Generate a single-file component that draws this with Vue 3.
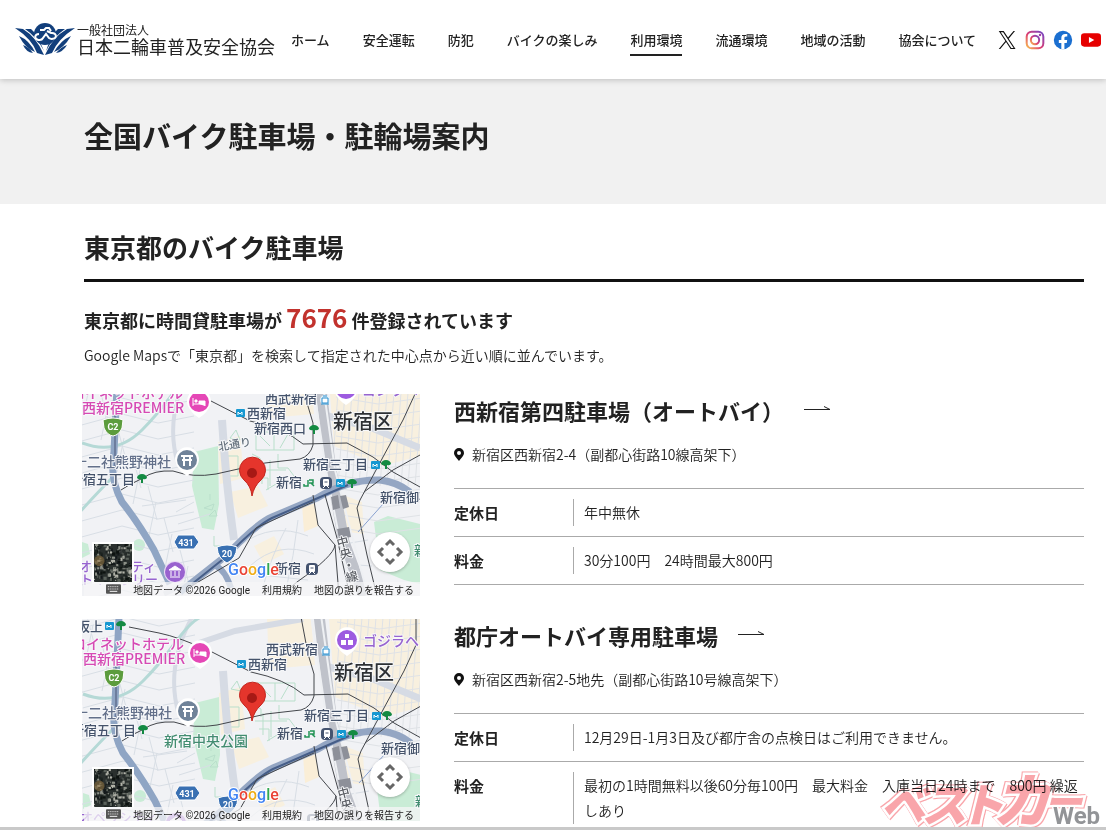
<script setup>
const nav = [
  { label: 'ホーム' },
  { label: '安全運転' },
  { label: '防犯' },
  { label: 'バイクの楽しみ' },
  { label: '利用環境', current: true },
  { label: '流通環境' },
  { label: '地域の活動' },
  { label: '協会について' },
]

const lots = [
  {
    name: '西新宿第四駐車場（オートバイ）',
    address: '新宿区西新宿2-4（副都心街路10線高架下）',
    closed: '年中無休',
    fee: '30分100円　24時間最大800円',
    shift: [0, 0],
    west: true,
  },
  {
    name: '都庁オートバイ専用駐車場',
    address: '新宿区西新宿2-5地先（副都心街路10号線高架下）',
    closed: '12月29日-1月3日及び都庁舎の点検日はご利用できません。',
    fee: '最初の1時間無料以後60分毎100円　最大料金　入庫当日24時まで　800円 繰返しあり',
    shift: [1, 26],
    park: true,
  },
]

const westStreets = Array.from({ length: 17 }, (_, i) => {
  const y = -44 + i * 16
  return `M-4 ${y + 12}L40 ${y}L76 ${y + 9}L112 ${y + 2}M${i * 8 - 6} ${y - 8}l${i % 2 ? 9 : -7} 34`
}).join('')
const eastStreets = Array.from({ length: 14 }, (_, i) => {
  const y = -36 + i * 13
  return `M254 ${y}L296 ${y + 7}L340 ${y + 1}M${258 + i * 7} -28l-9 120`
}).join('')
const southStreets = 'M160 150Q190 128 226 142M168 172Q196 146 232 160M180 196Q190 160 204 134M204 196Q212 162 216 126M150 178L226 186M262 150L286 146M262 170L290 172M96 130L128 120M94 118L112 108M60 112L104 106'

const trees = [[60, 84], [304, 70], [270, 89], [38, -20]]
const metros = [[158, 19], [293, 71], [258, 89], [26, -19]]
const trains = [[244, 89], [230, 175]]

let seed = 7
const random = () => {
  seed = (seed * 16807) % 2147483647
  return seed / 2147483647
}
const tones = ['#8b8f86', '#0d1210', '#5b625c', '#14191b', '#b3b4aa', '#1c2320']
const specks = Array.from({ length: 240 }, () => ({
  x: Math.floor(random() * 36),
  y: Math.floor(random() * 36),
  w: 1 + Math.floor(random() * 3),
  h: 1 + Math.floor(random() * 3),
  tone: tones[Math.floor(random() * tones.length)],
}))
</script>

<template>
  <div class="page">
    <header class="header">
      <a href="#" class="brand">
        <svg class="emblem" viewBox="0 0 60 33" aria-hidden="true">
          <g fill="#123f7c">
            <path d="M0 5L8 6Q21 14 28 30L29 32L22 30Q17 16 0 5Z" />
            <path d="M10 6L16 6Q19 8 20 12Q25 18 29 28Q22 14 10 6Z" />
            <path d="M4 13Q14 17 20 29Q10 25 4 13Z" />
            <path d="M8 22Q14 24 18 30Q11 29 8 22Z" />
            <path d="M60 5L52 6Q38 14 31 30L30 32L37 30Q43 16 60 5Z" />
            <path d="M50 6L43 6Q40 8 39 12Q34 18 31 28Q38 14 50 6Z" />
            <path d="M56 13Q46 17 39 29Q49 25 56 13Z" />
            <path d="M52 22Q46 24 41 30Q48 29 52 22Z" />
            <circle cx="30" cy="11" r="11" />
          </g>
          <path d="M25 7h4l2-2h3l2 3M24 11a4 3 0 1 0 4 4l3-4l3 4a4 3 0 1 0 2-5l-4-2" fill="none" stroke="#fff" stroke-width="2" />
        </svg>
        <span class="brand-text"><small>一般社団法人</small><span>日本二輪車普及安全協会</span></span>
      </a>
      <nav class="nav" aria-label="メイン">
        <a v-for="n in nav" :key="n.label" href="#" :class="{ current: n.current }">{{ n.label }}</a>
      </nav>
      <div class="social">
        <a href="#" aria-label="X">
          <svg viewBox="0 0 24 24"><path fill="#111" d="M14.3 10.2 22.7 0h-2l-7.300 8.800L7.600 0H1l8.800 13.300L1 24h2l7.700-9.300L16.800 24h6.600zM3.700 1.500h3.100l14 21h-3.100z" /></svg>
        </a>
        <a href="#" aria-label="Instagram">
          <svg viewBox="0 0 24 24">
            <defs>
              <linearGradient id="insta" x1="0" y1="1" x2="1" y2="0">
                <stop offset="0" stop-color="#f9c04d" /><stop offset=".45" stop-color="#dc3b72" /><stop offset="1" stop-color="#7148c8" />
              </linearGradient>
            </defs>
            <g fill="none" stroke="url(#insta)" stroke-width="2.400">
              <rect x="2" y="2" width="20" height="20" rx="6" /><circle cx="12" cy="12" r="5" />
            </g>
            <circle cx="18" cy="6" r="1.500" fill="#a044a8" />
          </svg>
        </a>
        <a href="#" aria-label="Facebook">
          <svg viewBox="0 0 24 24">
            <circle cx="12" cy="12" r="11" fill="#1b6fd0" />
            <path fill="#fff" d="M10 23v-7.500H7V12h3V9.400C10 6.400 11.800 4.700 14.500 4.700c1.300 0 2.600.2 2.600.2v3h-1.500c-1.500 0-1.900.9-1.900 1.800V12H17l-.5 3.500h-2.800V23z" />
          </svg>
        </a>
        <a href="#" aria-label="YouTube">
          <svg viewBox="0 0 24 24"><rect x="0" y="4" width="24" height="16" rx="4" fill="#e60000" /><path d="M9.500 8.500v7l6.500-3.500z" fill="#fff" /></svg>
        </a>
      </div>
    </header>

    <div class="hero"><h1>全国バイク駐車場・駐輪場案内</h1></div>

    <main class="main">
      <h2>東京都のバイク駐車場</h2>
      <p class="count">東京都に時間貸駐車場が <strong>7676</strong> 件登録されています</p>
      <p class="note">Google Mapsで「東京都」を検索して指定された中心点から近い順に並んでいます。</p>

      <article v-for="lot in lots" :key="lot.name" class="lot">
        <div class="map">
          <svg class="map-canvas" viewBox="0 0 338 202" preserveAspectRatio="xMidYMid slice" role="img" aria-label="地図">
            <rect width="338" height="202" fill="#f1f2f5" />
            <g :transform="`translate(${lot.shift[0]} ${lot.shift[1]})`">
              <g fill="#f8f0df">
                <path d="M136 48L158 42L162 84L138 90ZM148 98L176 92L186 112L156 124ZM246 -26H338V62L300 72L252 52ZM184 -26L228 -26L232 20L186 24ZM258 100L280 108L282 140L266 138ZM172 152L192 142L202 160L182 170Z" />
              </g>
              <path d="M220 110L232 106L236 132L222 138Z" fill="#faeed7" />
              <g fill="#c9ecd6">
                <path d="M112 58L136 52L137 110L132 136L120 134L110 92Z" />
                <path d="M292 128L306 122L338 130V190L322 186L298 176Z" />
                <circle cx="57" cy="151" r="6" /><path d="M0 148l6 2 2 10-8 4z" />
              </g>
              <g fill="none" stroke="#d8dee5" stroke-width="1">
                <path :d="westStreets" /><path :d="southStreets" />
              </g>
              <path :d="eastStreets" fill="none" stroke="#dfe2e6" stroke-width="1" />
              <g fill="none" stroke="#b9dfcb" stroke-width="1">
                <path d="M174 38h38v18h-38zM178 42l10 10M192 38v18M206 40l-8 14M142 62h14v20h-14zM180 68v22M188 66v26M172 76h32M132 142v10h6v8M127 122l6-6 2 6z" />
                <path d="M148 44l6-8 4 10zM176 84h10v12M196 60v14h10M184 96l10-6M122 114l10-4-2 6zM128 100v6M300 140l6 4-4 6M170 60l8 4v8M206 74l6 8" />
              </g>
              <g fill="none" stroke="#d6dbe4">
                <path d="M108 -26Q82 24 96 70" stroke-width="4" /><path d="M140 26Q144 90 152 146" stroke-width="8" />
                <path d="M116 -2L152 -14L220 -26" stroke-width="6" /><path d="M246 22L290 34L338 54" stroke-width="7" />
                <path d="M82 200L104 190" stroke-width="5" />
              </g>
              <path d="M0 49Q34 62 60 36Q76 20 92 -2T118 -28M-4 120Q16 98 30 84" fill="none" stroke="#b5d9d6" stroke-width="3" />
              <path d="M36 -28L32 58Q27 84 40 108Q56 128 72 156L88 190" fill="none" stroke="#8fa5c4" stroke-width="7" />
              <path d="M33 8V76" fill="none" stroke="#6d7d9d" stroke-width="2" />
              <g fill="none" stroke="#bfc2ca">
                <path d="M236 -30L248 70L262 148L282 202" stroke-width="11" />
                <path d="M228 -30L244 76L257 142L270 202" stroke="#eef0f3" stroke-width="2" />
                <path d="M238 -30L253 76L270 142L286 202" stroke="#eef0f3" stroke-width="2" />
              </g>
              <path d="M249 103l7-2 2 13-7 2zM258 102l6-1 3 12-6 2zM255 135l12-2 2 10-12 2z" fill="#8d9099" />
              <g fill="none" stroke="#94a6c3" stroke-linejoin="round">
                <path d="M98 198L145 161Q174 130 190 123L235 104Q266 85 298 86Q315 88 328 98" stroke-width="7" />
                <path d="M134 172Q143 176 149 194" stroke-width="6" />
                <path d="M110 190L145 162Q174 132 190 124L236 104L266 91" stroke="#465e88" stroke-width="2" />
              </g>
              <g fill="none" stroke="#43464b" stroke-width="1">
                <path d="M39 96L47 91L61 84Q72 76 91 77Q111 84 134 80L183 69L218 65Q228 62 231 51V29L225 9L218 -28" />
                <path d="M46 -18L76 -12Q96 -8 129 7L168 27Q202 34 221 50L265 49L291 63L311 78L338 93" />
                <path d="M333 -26L333 0L321 26L301 63L278 106L275 114L285 161L295 202M338 61L311 76L282 98" />
                <path d="M231 101L236 131L253 151Q252 162 215 188L200 200M253 151L257 202M243 101L255 144L268 202M106 194L157 164L174 134L200 122L231 108" />
              </g>
              <path d="M310 100L276 138" stroke="#8aa2d0" stroke-width="1" />

              <g class="labels">
                <g fill="#d64ab4">
                  <text x="101" y="4" font-size="14" text-anchor="end">ロイネットホテル</text>
                  <text x="0" y="19" font-size="14">西新宿PREMIER</text>
                </g>
                <g fill="#63708a" font-size="14"><text x="89" y="73" text-anchor="end">十二社熊野神社</text></g>
                <g fill="#45536b" font-size="13">
                  <text x="53" y="90" text-anchor="end">西新宿五丁目</text>
                  <text x="20" y="-14" text-anchor="end">中野坂上</text>
                  <text x="183" y="9">西武新宿</text><text x="165" y="24">西新宿</text>
                  <text v-if="lot.west" x="172" y="39">新宿西口</text>
                  <text x="221" y="75">新宿三丁目</text><text x="194" y="93">新宿</text>
                  <text x="298" y="108">新宿御苑前</text><text v-if="lot.west" x="193" y="179">新宿</text>
                </g>
                <text v-if="lot.west" x="137" y="57" font-size="11" fill="#65717d" transform="rotate(-10 137 57)">北通り</text>
                <text x="251" y="35" font-size="20" fill="#2d3034">新宿区</text>
                <text v-if="lot.park" x="81" y="101" font-size="14" fill="#438d71">新宿中央公園</text>
                <text x="332" y="161" font-size="13" fill="#438d71">新宿御苑</text>
                <g fill="#9764cf">
                  <text x="280" y="1" font-size="14">ゴジラヘッド</text>
                  <text x="74" y="177" font-size="13" text-anchor="end">オペラシティ</text>
                  <text x="76" y="190" font-size="13" text-anchor="end">アートギャラリー</text>
                </g>
                <text x="259" y="142" font-size="12" fill="#5d6066" class="vertical" transform="rotate(-15 259 142)">中央・線</text>
              </g>

              <g v-for="t in trees" :key="`t${t}`" :transform="`translate(${t[0]} ${t[1]})`">
                <path d="M-5 0a5 4 0 1 1 10 0q-2 2-4 1v4h-2v-4q-2 1-4-1z" fill="#138a42" />
              </g>
              <g v-if="lot.west" transform="translate(232 35)"><path d="M-5 0a5 4 0 1 1 10 0q-2 2-4 1v4h-2v-4q-2 1-4-1z" fill="#138a42" /></g>
              <g v-for="m in metros" :key="`m${m}`" :transform="`translate(${m[0]} ${m[1]})`">
                <rect x="-4" y="-4" width="9" height="8" rx="1" fill="#1698d1" />
                <path d="M-2 2v-3l2 2 2-2v3" fill="none" stroke="#fff" stroke-width="1" />
              </g>
              <g v-for="t in trains" :key="`r${t}`" :transform="`translate(${t[0]} ${t[1]})`">
                <rect x="-6" y="-6" width="12" height="12" rx="4" fill="#44536f" />
                <rect x="-3" y="-4" width="6" height="7" rx="1" fill="#fff" /><path d="M-2-2h4v2h-4zM-3 5l2-2M3 5l-2-2" fill="#44536f" stroke="#fff" stroke-width="1" />
              </g>
              <path d="M222 90v2h4v-6M232 92l-3-3h-2M227 86h4v3h-2" fill="none" stroke="#239455" stroke-width="1.500" />
              <g transform="translate(243 6)"><circle r="5" fill="#e3f1fa" /><path d="M-3-2h6v5h-6zM-2-4h4M-4 4h8" fill="#fff" stroke="#2b8fce" stroke-width="1" /></g>

              <g transform="translate(117 8)">
                <path d="M-11 4Q-8 11 0 16Q8 11 11 4A12 12 0 1 0 -11 4Z" fill="#fff" /><circle r="10" fill="#e547b6" />
                <path d="M-6-4v8M-6 2H6M6 4v-5H0v3M-4-2h2v2h-2z" fill="#fff" stroke="#fff" stroke-width="1" />
              </g>
              <g transform="translate(105 66)">
                <path d="M-11 4Q-8 11 0 16Q8 11 11 4A12 12 0 1 0 -11 4Z" fill="#fff" /><circle r="10" fill="#708399" />
                <path d="M-6-4H6M-5 0H5M-3-4V6M3-4V6" stroke="#fff" stroke-width="2" />
              </g>
              <g transform="translate(264 -5)">
                <path d="M-11 4Q-8 11 0 16Q8 11 11 4A12 12 0 1 0 -11 4Z" fill="#fff" /><circle r="10" fill="#9d5be0" />
                <path d="M-2-6h4v4h-4zM-6 0h5v5h-5zM1 0h5v5H1z" fill="#fff" />
              </g>
              <g transform="translate(93 178)">
                <circle r="11" fill="#e8d9f5" /><circle r="10" fill="#9962cf" />
                <path d="M-6-2L0-6L6-2ZM-5 5H5M-4-1V4M0-1V4M4-1V4" fill="#fff" stroke="#fff" stroke-width="1" />
              </g>
              <g class="route">
                <path d="M21 26Q31 22 41 26L40 34Q37 41 31 42Q25 41 22 34Z" fill="#5c9c3d" stroke="#fff" /><text x="31" y="36">C2</text>
                <path d="M92 148L96 141H112L117 148L112 155H96Z" fill="#3970b2" stroke="#fff" /><text x="104" y="152">431</text>
                <path d="M135 153Q145 149 155 153Q154 165 145 169Q136 165 135 153Z" fill="#3970b2" stroke="#fff" /><text x="145" y="163">20</text>
              </g>
            </g>
            <g>
              <path d="M170 102Q169 92 162 86A13 13 0 1 1 179 86Q172 92 170 102Z" fill="#e5352c" stroke="#c3261f" stroke-width="1" />
              <circle cx="170" cy="79" r="5" fill="#a71915" />
            </g>
            <text class="google" x="146" y="181"><tspan fill="#4285f4">G</tspan><tspan fill="#ea4335">o</tspan><tspan fill="#f0ad16">o</tspan><tspan fill="#4285f4">g</tspan><tspan fill="#34a853">l</tspan><tspan fill="#ea4335">e</tspan></text>
          </svg>
          <button class="satellite" aria-label="航空写真">
            <svg viewBox="0 0 36 36">
              <rect width="36" height="36" fill="#2a302e" />
              <rect v-for="(s, i) in specks" :key="i" :x="s.x" :y="s.y" :width="s.w" :height="s.h" :fill="s.tone" />
              <circle cx="5" cy="16" r="5" fill="#8a6e3e" opacity=".6" />
            </svg>
          </button>
          <button class="pan" aria-label="地図の移動">
            <svg viewBox="0 0 40 40" fill="none" stroke="#666" stroke-width="3"><path d="M16 13l4-4 4 4M16 27l4 4 4-4M13 16l-4 4 4 4M27 16l4 4-4 4" /></svg>
          </button>
          <div class="credits">
            <svg viewBox="0 0 16 10" aria-hidden="true"><rect width="16" height="10" rx="1" fill="#555" /><path d="M2 2.500h12M2 5h12" stroke="#fff" stroke-dasharray="1 1" /><path d="M4 7.500h8" stroke="#fff" /></svg>
            <span>地図データ ©2026 Google</span><a href="#">利用規約</a><a href="#">地図の誤りを報告する</a>
          </div>
        </div>

        <div class="info">
          <h3><a href="#">{{ lot.name }}<svg viewBox="0 0 26 8" aria-hidden="true"><path d="M0 5.500H26L20 2.500" fill="none" stroke="#222" stroke-width="1" /></svg></a></h3>
          <p class="address">
            <svg viewBox="0 0 10 13" aria-hidden="true"><path fill="#111" fill-rule="evenodd" d="M5 0a5 5 0 0 1 5 5c0 3-3 5-5 8C3 10 0 8 0 5a5 5 0 0 1 5-5zM5 3a2 2 0 1 0 0 4a2 2 0 0 0 0-4z" /></svg>
            {{ lot.address }}
          </p>
          <table>
            <tbody>
              <tr><th scope="row">定休日</th><td><div>{{ lot.closed }}</div></td></tr>
              <tr><th scope="row">料金</th><td><div>{{ lot.fee }}</div></td></tr>
            </tbody>
          </table>
        </div>
      </article>
    </main>

    <div class="watermark">
      <svg viewBox="0 0 226 64" role="img" aria-label="ベストカーWeb">
        <text class="mark-text" y="56"><tspan x="2" font-size="46">ベ</tspan><tspan x="43" font-size="46">ス</tspan><tspan x="80" font-size="46">ト</tspan><tspan x="114" font-size="58">カ</tspan><tspan x="166" y="50" font-size="38">ー</tspan></text>
        <text x="175" y="58" class="web">Web</text>
      </svg>
    </div>
  </div>
</template>

<style>
body { margin: 0; background: #fff; }
</style>

<style scoped>
* { box-sizing: border-box; }
.page { position: relative; height: 100vh; overflow: hidden; border-bottom: 3px solid #c9c9c9; color: #222; font-family: "Noto Sans CJK JP", sans-serif; font-size: 14px; }
a { color: inherit; text-decoration: none; }
svg { display: block; }
h1, h2, h3, p { margin: 0; }
button { padding: 0; border: 0; }

.header { position: relative; display: flex; align-items: center; height: 79px; padding: 0 5px 0 15px; background: #fff; box-shadow: 0 1px 6px rgba(0, 0, 0, .22); }
.brand { display: flex; align-items: center; gap: 2px; }
.emblem { width: 60px; height: 33px; }
.brand-text { display: flex; flex-direction: column; padding-bottom: 3px; font-size: 18px; line-height: 18px; white-space: nowrap; }
.brand-text small { font-size: 12px; line-height: 15px; }
.nav { display: flex; gap: 33px; margin-left: 16px; font-size: 13px; font-weight: 500; line-height: 28px; white-space: nowrap; }
.nav a { border-bottom: 2px solid transparent; padding-top: 2px; }
.nav .current { border-color: #222; }
.social { display: flex; gap: 8px; margin-left: auto; }
.social svg { width: 20px; height: 20px; }
.social a:first-child svg { padding: 1px; }

.hero { height: 125px; padding: 34px 84px; background: #f1f1f1; }
h1 { font-size: 29px; font-weight: 700; line-height: 44px; }

.main { padding: 23px 22px 0 84px; }
h2 { padding-bottom: 12px; border-bottom: 3px solid #111; font-size: 26px; font-weight: 700; line-height: 40px; }
.count { margin-top: 16px; font-size: 18px; font-weight: 700; line-height: 38px; }
.count strong { color: #c2322d; font-size: 26px; font-weight: 700; }
.note { margin-top: 4px; line-height: 25px; font-weight: 350; }

.lot { display: grid; grid-template-columns: 338px 1fr; gap: 34px; margin: 0 0 23px -2px; }
.note + .lot { margin-top: 26px; }
.map { position: relative; height: 202px; overflow: hidden; }
.map-canvas { width: 100%; height: 100%; }
.labels { font-weight: 500; }
.labels text { paint-order: stroke; stroke: #f7f8fa; stroke-width: 2px; stroke-linejoin: round; }
.vertical { writing-mode: vertical-rl; }
.route text { fill: #fff; font: bold 9px Roboto, sans-serif; text-anchor: middle; }
.google { font: 500 16px Roboto, sans-serif; paint-order: stroke; stroke: #fff; stroke-width: 2px; }
.satellite { position: absolute; left: 10px; bottom: 12px; width: 42px; height: 42px; border: 2px solid #fff; }
.satellite svg { width: 100%; height: 100%; }
.pan { position: absolute; right: 10px; bottom: 24px; width: 40px; height: 40px; border-radius: 50%; background: #fff; box-shadow: 0 1px 3px rgba(0, 0, 0, .25); }
.credits { position: absolute; right: 0; bottom: 0; display: flex; align-items: center; gap: 12px; height: 14px; padding: 0 6px 0 22px; background: rgba(245, 245, 247, .75); color: #222; font-family: Roboto, "Noto Sans CJK JP", sans-serif; font-size: 10px; white-space: nowrap; }
.credits svg { width: 15px; height: 10px; }

h3 { font-size: 22px; font-weight: 700; line-height: 32px; }
h3 a { display: inline-flex; align-items: center; gap: 20px; }
h3 svg { width: 26px; height: 8px; margin-bottom: 4px; }
.address { display: flex; align-items: center; gap: 8px; margin: 16px 0 21px; line-height: 25px; font-weight: 350; }
.address svg { width: 10px; height: 13px; }
table { width: 100%; border-collapse: collapse; border-top: 1px solid #aaa; }
tr { border-bottom: 1px solid #aaa; }
th { width: 119px; padding: 11px 0; font-size: 15px; font-weight: 700; line-height: 25px; text-align: left; vertical-align: top; }
td { padding: 10px 0; font-weight: 350; line-height: 25px; }
td div { padding: 1px 0 1px 10px; border-left: 1px solid #aaa; }

.watermark { position: absolute; right: 2px; bottom: -3px; width: 226px; height: 64px; pointer-events: none; mix-blend-mode: multiply; }
.mark-text { fill: #f9a5aa; font-weight: 900; font-style: italic; paint-order: stroke; stroke: #fff; stroke-width: 5px; filter: drop-shadow(1px 1px #f9a5aa) drop-shadow(-1px -1px #f9a5aa); }
.web { fill: #929497; font: bold 24px Roboto, sans-serif; paint-order: stroke; stroke: #fff; stroke-width: 3px; }
</style>
